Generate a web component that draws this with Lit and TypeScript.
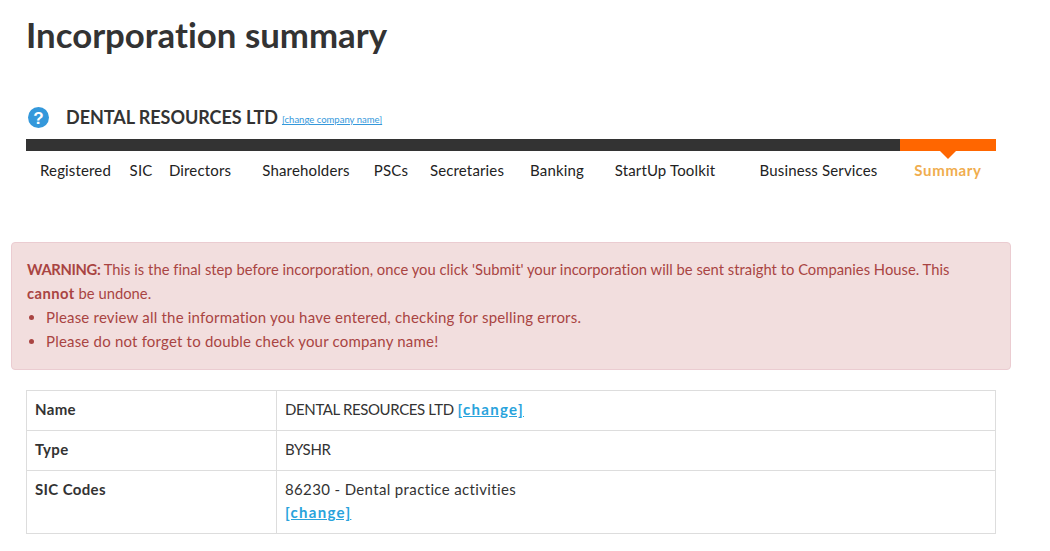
import { LitElement, html, css } from "lit";
import { customElement } from "lit/decorators.js";

const steps: [string, number][] = [
  ["Registered", 99], ["SIC", 32], ["Directors", 86], ["Shareholders", 126], ["PSCs", 44],
  ["Secretaries", 108], ["Banking", 72], ["StartUp Toolkit", 144], ["Business Services", 163],
];

@customElement("app-root")
export class AppRoot extends LitElement {
  static styles = css`
    :host { display: block; height: 551px; overflow: hidden; padding: 0 15px; width: 970px; margin-left: 11px;
      font-family: Lato, "Noto Sans", sans-serif; font-size: 15px; color: #333; font-variant-ligatures: none; }
    h1 { margin: 0; padding-top: 13px; font-size: 34.8px; line-height: 44px; font-weight: 700; color: #333; }
    .company { display: flex; align-items: center; margin-top: 48px; height: 24px; }
    .help { width: 21px; height: 21px; flex: none; margin: 0 1px 0 2px; }
    .company b { margin-left: 16px; font-size: 18px; font-weight: 700; color: #333; letter-spacing: -0.05px; }
    .company a { margin: 5px 0 0 4px; font-size: 9.5px; color: #3498db; text-decoration: underline; }
    .nav { margin-top: 10px; display: flex; height: 12px; background: #333; }
    .nav .fill { flex: 1; }
    .nav .active { width: 96px; background: #f60; position: relative; }
    .nav .active::after { content: ""; position: absolute; left: 40px; top: 12px; border: 8px solid transparent; border-top-color: #f60; border-bottom: 0; }
    .steps { display: flex; height: 38px; align-items: center; font-size: 15px; color: #222; letter-spacing: 0.15px; }
    .steps span { text-align: center; white-space: nowrap; }
    .steps .cur { color: #f0ad4e; font-weight: 700; width: 96px; letter-spacing: 0.65px; }
    .alert { margin: 53px -15px 0; padding: 14px 15px 15px; height: 128px; box-sizing: border-box; background: #f2dede; border: 1px solid #ebccd1; border-radius: 4px; color: #a94442; line-height: 24px; font-size: 14.75px; letter-spacing: 0.02px; }
    .alert ul { margin: 0; padding-left: 19px; font-size: 15px; letter-spacing: 0.2px; }
    .alert strong { font-weight: 700; }
    .alert .warn { letter-spacing: -0.35px; }
    .alert .cannot { letter-spacing: 0.45px; }
    table { margin-top: 20px; width: 100%; border-collapse: collapse; table-layout: fixed; line-height: 23px; }
    td { border: 1px solid #ddd; padding: 7px 8px 9px; vertical-align: top; color: #333; }
    td:first-child { width: 250px; box-sizing: border-box; font-weight: 700; letter-spacing: 0.35px; }
    td a { color: #29a3dc; font-weight: 700; text-decoration: underline; letter-spacing: 1.3px; }
    .caps { letter-spacing: -0.38px; }
    .wide { letter-spacing: 0.36px; }
  `;

  render() {
    return html`
      <h1>Incorporation summary</h1>
      <div class="company">
        <svg class="help" viewBox="0 0 21 21">
          <circle cx="10.5" cy="10.5" r="10.5" fill="#3498db"/>
          <text x="10.5" y="16.5" text-anchor="middle" font-family="Liberation Sans" font-weight="700" font-size="17" fill="#fff">?</text>
        </svg>
        <b>DENTAL RESOURCES LTD</b><a href="#">[change company name]</a>
      </div>
      <div class="nav"><div class="fill"></div><div class="active"></div></div>
      <div class="steps">
        ${steps.map(([t, w]) => html`<span style="width:${w}px">${t}</span>`)}
        <span class="cur">Summary</span>
      </div>
      <div class="alert">
        <strong class="warn">WARNING:</strong> This is the final step before incorporation, once you click 'Submit' your incorporation will be sent straight to Companies House. This
        <strong class="cannot">cannot</strong> be undone.
        <ul>
          <li>Please review all the information you have entered, checking for spelling errors.</li>
          <li>Please do not forget to double check your company name!</li>
        </ul>
      </div>
      <table>
        <tr><td>Name</td><td><span class="caps">DENTAL RESOURCES LTD</span> <a href="#">[change]</a></td></tr>
        <tr><td>Type</td><td><span class="caps">BYSHR</span></td></tr>
        <tr><td>SIC Codes</td><td><span class="wide">86230 - Dental practice activities</span><br><a href="#">[change]</a></td></tr>
      </table>
    `;
  }
}
